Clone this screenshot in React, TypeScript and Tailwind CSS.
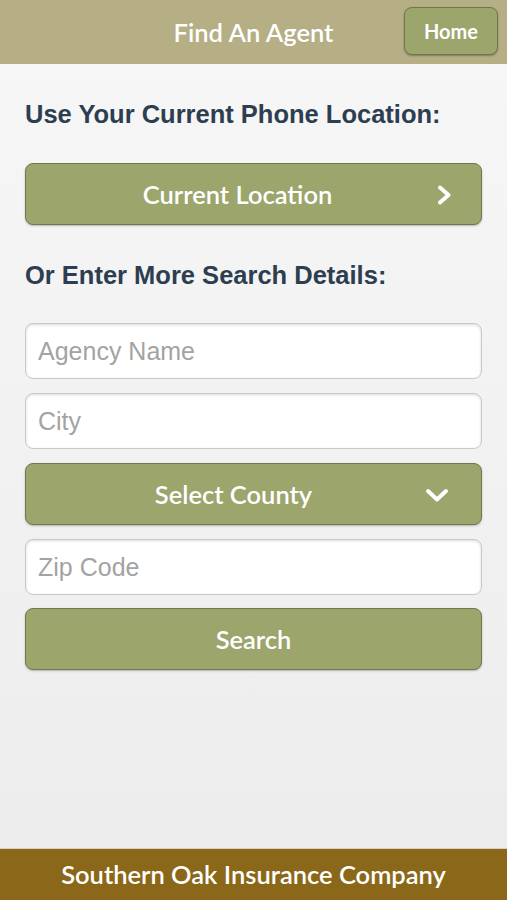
import React from 'react';

const lato = { fontFamily: 'Lato, "Open Sans", sans-serif' } as const;

const GreenButton: React.FC<{ label: string; icon?: React.ReactNode; textClass?: string }> = ({ label, icon, textClass }) => (
  <button
    type="button"
    className="relative flex h-[62px] w-full items-center justify-center rounded-[8px] border border-[#6f7a4b] bg-[#9ba56c] text-white shadow-[0_1px_2px_rgba(0,0,0,0.25)]"
  >
    <span className={`text-[25.5px] font-semibold ${textClass ?? ''}`} style={lato}>
      {label}
    </span>
    {icon}
  </button>
);

const TextField: React.FC<{ placeholder: string }> = ({ placeholder }) => (
  <input
    type="text"
    placeholder={placeholder}
    className="h-[56px] w-full rounded-[8px] border border-[#c8c8c8] bg-white px-[12px] text-[25px] text-[#333] placeholder:text-[#a3a3a3] shadow-[inset_0_1px_3px_rgba(0,0,0,0.15)] outline-none"
    style={{ fontFamily: '"Liberation Sans", Arial, sans-serif' }}
  />
);

const App: React.FC = () => {
  return (
    <div className="flex h-[900px] w-[507px] flex-col bg-gradient-to-b from-[#f7f7f7] to-[#ececec]">
      {/* header */}
      <header className="relative flex h-[64px] shrink-0 items-center justify-center bg-[#b6ae85]">
        <h1 className="text-[25.5px] font-semibold text-white" style={lato}>
          Find An Agent
        </h1>
        <button
          type="button"
          className="absolute right-[9px] top-[7px] flex h-[48px] w-[94px] items-center justify-center rounded-[8px] border border-[#6f7a4b] bg-[#9ba56c] text-[20px] font-bold text-white shadow-[0_1px_2px_rgba(0,0,0,0.3)]"
          style={lato}
        >
          Home
        </button>
      </header>

      <main className="flex flex-1 flex-col px-[25px] pt-[35px]" style={{ fontFamily: '"Liberation Sans", Arial, sans-serif' }}>
        <h2 className="text-[25.5px] font-bold leading-[30px] text-[#2c3e50]">Use Your Current Phone Location:</h2>

        <div className="mt-[34px]">
          <GreenButton
            label="Current Location"
            textClass="-ml-[32px]"
            icon={
              <svg className="absolute right-[28px] top-[21px]" width="16" height="20" viewBox="0 0 16 20" fill="none">
                <path d="M3 2.5 L11.5 10 L3 17.5" stroke="white" strokeWidth="4" strokeLinecap="round" strokeLinejoin="round" />
              </svg>
            }
          />
        </div>

        <h2 className="mt-[35px] text-[25.5px] font-bold leading-[30px] text-[#2c3e50]">Or Enter More Search Details:</h2>

        <div className="mt-[33px] flex flex-col gap-[14px]">
          <TextField placeholder="Agency Name" />
          <TextField placeholder="City" />
          <GreenButton
            label="Select County"
            textClass="-ml-[40px]"
            icon={
              <svg className="absolute right-[32px] top-[24px]" width="24" height="16" viewBox="0 0 24 16" fill="none">
                <path d="M3 3 L12 11.5 L21 3" stroke="white" strokeWidth="4" strokeLinecap="round" strokeLinejoin="round" />
              </svg>
            }
          />
          <TextField placeholder="Zip Code" />
          <div className="-mt-px">
            <GreenButton label="Search" />
          </div>
        </div>
      </main>

      {/* footer */}
      <footer className="flex h-[52px] shrink-0 items-center justify-center border-t border-[#d8d0c0] bg-[#8b6819]">
        <span className="text-[25.5px] font-semibold text-white" style={lato}>
          Southern Oak Insurance Company
        </span>
      </footer>
    </div>
  );
};

export default App;
